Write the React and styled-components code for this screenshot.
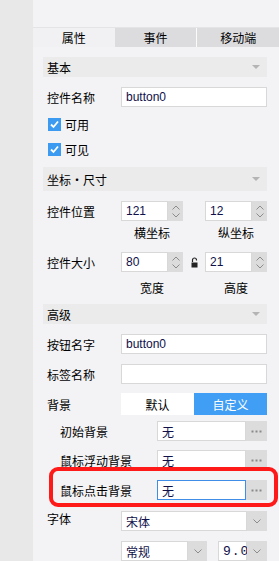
import React from 'react'
import styled, { createGlobalStyle } from 'styled-components'

const Global = createGlobalStyle`
    body {
        margin:0;
        background:#f3f3f5;
        font-family:"Liberation Sans", "Noto Sans CJK SC", sans-serif;
        font-size:12px;
        color:#000;
    }
`
const Page = styled.div`
    display:flex;
    height:561px;
    overflow:hidden;
`
const Strip = styled.div`
    width:33px;
    background:#e8e8e8;
`
const Panel = styled.div`
    flex:1;
    display:flex;
    flex-direction:column;
    background:#f3f3f5;
`
const Tabs = styled.div`
    display:flex;
    margin-top:27px;
    height:25px;
    border-top:1px solid #e4e4e6;
`
const Tab = styled.div`
    flex:1;
    display:flex;
    align-items:center;
    justify-content:center;
    font-family:"Noto Sans CJK SC", sans-serif;
    font-size:12px;
    background:${p => p.active ? '#f1f1f3' : '#dcdcdf'};
    border-left:${p => p.split ? '1px solid #fbfbfb' : 'none'};
`
const Content = styled.div`
    display:flex;
    flex-direction:column;
    padding:0 12px 0 10px;
    font-family:"Noto Sans CJK SC", sans-serif;
`
const Header = styled.div`
    display:flex;
    align-items:center;
    justify-content:space-between;
    height:${p => p.h || 20}px;
    margin-top:${p => p.mt}px;
    padding:0 7px 0 4px;
    background:#ebebeb;
`
const Tri = styled.span`
    width:0;
    height:0;
    border-left:4px solid transparent;
    border-right:4px solid transparent;
    border-top:4px solid #b4b4b4;
`
const Row = styled.div`
    position:relative;
    display:flex;
    align-items:${p => p.top ? 'flex-start' : 'center'};
    height:${p => p.h || 20}px;
    margin-top:${p => p.mt}px;
`
const Label = styled.div`
    width:${p => p.w || 78}px;
    padding-left:${p => p.pl || 4}px;
    box-sizing:border-box;
    flex-shrink:0;
    line-height:${p => p.top ? '16px' : 'normal'};
`
const Input = styled.div`
    flex:${p => p.w ? 'none' : 1};
    width:${p => p.w ? p.w + 'px' : 'auto'};
    height:100%;
    box-sizing:border-box;
    display:flex;
    align-items:center;
    padding-left:4px;
    background:#fff;
    border:1px solid ${p => p.focus ? '#3f8de6' : '#d8d8d8'};
    font-family:${p => p.mono ? '"Liberation Mono", monospace' : '"Liberation Sans", "Noto Sans CJK SC", sans-serif'};
    font-size:${p => p.mono ? 13 : 12}px;
    letter-spacing:${p => p.mono ? '1px' : 'normal'};
    color:#10104a;
`
const CheckRow = styled.div`
    display:flex;
    align-items:center;
    gap:4px;
    height:13px;
    margin-top:${p => p.mt}px;
    padding-left:5px;
`
const Box = styled.span`
    width:13px;
    height:13px;
    background:#3c9bf0;
    display:flex;
    align-items:center;
    justify-content:center;
`
const Group = styled.div`
    display:flex;
    width:62px;
    height:100%;
`
const Side = styled.div`
    width:${p => p.w || 15}px;
    flex-shrink:0;
    height:100%;
    background:#dcdcdd;
    display:flex;
    flex-direction:${p => p.col ? 'column' : 'row'};
    align-items:center;
    justify-content:${p => p.col ? 'space-around' : 'center'};
    padding:${p => p.col ? '2px 0' : 0};
    box-sizing:border-box;
`
const LockSlot = styled.div`
    width:22px;
    display:flex;
    justify-content:center;
`
const SubRow = styled.div`
    display:flex;
    margin-top:${p => p.mt}px;
    padding-left:78px;
    line-height:12px;
`
const Sub = styled.div`
    width:62px;
    text-align:center;
    margin-right:${p => p.gap || 0}px;
`
const Toggle = styled.div`
    flex:1;
    display:flex;
    height:100%;
    background:#fff;
`
const ToggleItem = styled.div`
    flex:1;
    display:flex;
    align-items:center;
    justify-content:center;
    background:${p => p.on ? '#409ef4' : '#fff'};
    color:${p => p.on ? '#fff' : '#000'};
`
const Highlight = styled.div`
    position:absolute;
    left:6px;
    right:-11px;
    top:-13px;
    bottom:-7px;
    border:4px solid #ff1a1a;
    border-radius:9px;
    pointer-events:none;
`
const Dots = () => (
    <svg width="11" height="3" viewBox="0 0 11 3">
        <rect x="0.5" y="0.5" width="2" height="2" fill="#8a8a8a" />
        <rect x="4.5" y="0.5" width="2" height="2" fill="#8a8a8a" />
        <rect x="8.5" y="0.5" width="2" height="2" fill="#8a8a8a" />
    </svg>
)
const Chev = ({ up }) => (
    <svg width="8" height="5" viewBox="0 0 8 5">
        <path d={up ? 'M0.5 4.5 L4 1 L7.5 4.5' : 'M0.5 0.5 L4 4 L7.5 0.5'} fill="none" stroke="#8c8c8c" strokeWidth="1" />
    </svg>
)
const Check = () => (
    <svg width="11" height="11" viewBox="0 0 11 11">
        <path d="M2 5.5 L4.5 8 L9 2.5" fill="none" stroke="#fff" strokeWidth="1.8" />
    </svg>
)
const Lock = () => (
    <svg width="7" height="11" viewBox="0 0 7 11">
        <path d="M1.5 5 V3 A2 2 0 0 1 5.5 3 V3.5" fill="none" stroke="#222" strokeWidth="1.2" />
        <rect x="0.5" y="5.5" width="6" height="5" fill="#222" />
    </svg>
)

const Spin = ({ value }) => (
    <Group>
        <Input>{value}</Input>
        <Side col><Chev up /><Chev /></Side>
    </Group>
)

const App = () => {
    return (
        <Page>
            <Global />
            <Strip />
            <Panel>
                <Tabs>
                    <Tab active>属性</Tab>
                    <Tab>事件</Tab>
                    <Tab split>移动端</Tab>
                </Tabs>
                <Content>
                    <Header mt={10}>基本<Tri /></Header>
                    <Row mt={10}>
                        <Label>控件名称</Label>
                        <Input>button0</Input>
                    </Row>
                    <CheckRow mt={11}><Box><Check /></Box>可用</CheckRow>
                    <CheckRow mt={12}><Box><Check /></Box>可见</CheckRow>
                    <Header mt={11} h={24}>坐标・尺寸<Tri /></Header>
                    <Row mt={10}>
                        <Label>控件位置</Label>
                        <Spin value="121" />
                        <LockSlot />
                        <Spin value="12" />
                    </Row>
                    <SubRow mt={6}><Sub gap={22}>横坐标</Sub><Sub>纵坐标</Sub></SubRow>
                    <Row mt={13}>
                        <Label>控件大小</Label>
                        <Spin value="80" />
                        <LockSlot><Lock /></LockSlot>
                        <Spin value="21" />
                    </Row>
                    <SubRow mt={10}><Sub gap={22}>宽度</Sub><Sub>高度</Sub></SubRow>
                    <Header mt={10}>高级<Tri /></Header>
                    <Row mt={10}>
                        <Label>按钮名字</Label>
                        <Input>button0</Input>
                    </Row>
                    <Row mt={10}>
                        <Label>标签名称</Label>
                        <Input />
                    </Row>
                    <Row mt={9} h={22}>
                        <Label>背景</Label>
                        <Toggle>
                            <ToggleItem>默认</ToggleItem>
                            <ToggleItem on>自定义</ToggleItem>
                        </Toggle>
                    </Row>
                    <Row mt={6}>
                        <Label w={114} pl={17}>初始背景</Label>
                        <Input>无</Input>
                        <Side w={21}><Dots /></Side>
                    </Row>
                    <Row mt={9}>
                        <Label w={114} pl={17}>鼠标浮动背景</Label>
                        <Input>无</Input>
                        <Side w={21}><Dots /></Side>
                    </Row>
                    <Row mt={10}>
                        <Label w={114} pl={17}>鼠标点击背景</Label>
                        <Input focus>无</Input>
                        <Side w={21}><Dots /></Side>
                        <Highlight />
                    </Row>
                    <Row mt={11} top>
                        <Label top>字体</Label>
                        <Input>宋体</Input>
                        <Side w={20}><Chev /></Side>
                    </Row>
                    <Row mt={10}>
                        <Label />
                        <Input w={67}>常规</Input>
                        <Side w={19}><Chev /></Side>
                        <Input w={29} style={{ marginLeft: 11 }} mono>9.0</Input>
                        <Side w={20}><Chev /></Side>
                    </Row>
                </Content>
            </Panel>
        </Page>
    )
}

export default App
